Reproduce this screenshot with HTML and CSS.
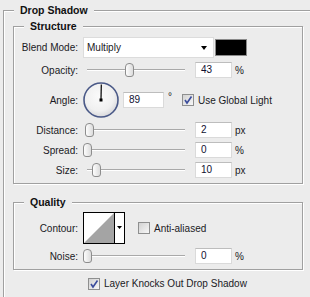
FILE: index.html
```html
<!DOCTYPE html>
<html lang="en">
<head>
    <meta charset="UTF-8">
    <title>Drop Shadow</title>
    <link rel="stylesheet" href="styles.css">
</head>
<body>
    <fieldset class="panel">
        <legend>Drop Shadow</legend>

        <fieldset class="group structure">
            <legend>Structure</legend>
            <div class="row blend">
                <label class="lbl">Blend Mode:</label>
                <div class="select"><span>Multiply</span><span class="caret"></span></div>
                <div class="swatch"></div>
            </div>
            <div class="row">
                <label class="lbl">Opacity:</label>
                <div class="slider"><div class="track"></div><div class="thumb" style="left: 42px"></div></div>
                <div class="num">43</div><span class="unit">%</span>
            </div>
            <div class="row angle">
                <label class="lbl">Angle:</label>
                <svg class="dial" width="36" height="36" viewBox="0 0 36 36">
                    <defs>
                        <radialGradient id="dialFill" cx="45%" cy="40%" r="60%">
                            <stop offset="0" stop-color="#fbfbfb"/>
                            <stop offset="0.7" stop-color="#f0f0f0"/>
                            <stop offset="1" stop-color="#d9d9dc"/>
                        </radialGradient>
                    </defs>
                    <circle cx="18" cy="18" r="17" fill="url(#dialFill)" stroke="#4a5987" stroke-width="1.6"/>
                    <line x1="18" y1="18" x2="18.3" y2="2.5" stroke="#000" stroke-width="1.2"/>
                    <rect x="16.5" y="16.5" width="3" height="3" fill="#000"/>
                </svg>
                <div class="num wide">89</div><span class="unit deg">&deg;</span>
                <span class="check on"></span><span class="check-text">Use Global Light</span>
            </div>
            <div class="row">
                <label class="lbl">Distance:</label>
                <div class="slider"><div class="track"></div><div class="thumb" style="left: 2px"></div></div>
                <div class="num">2</div><span class="unit">px</span>
            </div>
            <div class="row">
                <label class="lbl">Spread:</label>
                <div class="slider"><div class="track"></div><div class="thumb" style="left: 0px"></div></div>
                <div class="num">0</div><span class="unit">%</span>
            </div>
            <div class="row">
                <label class="lbl">Size:</label>
                <div class="slider"><div class="track"></div><div class="thumb" style="left: 9px"></div></div>
                <div class="num">10</div><span class="unit">px</span>
            </div>
        </fieldset>

        <fieldset class="group quality">
            <legend>Quality</legend>
            <div class="row contour-row">
                <label class="lbl">Contour:</label>
                <svg class="contour" width="42" height="32" viewBox="0 0 42 32">
                    <rect x="0.5" y="0.5" width="41" height="31" fill="#fff" stroke="#000"/>
                    <polygon points="1,31 31,1 31,31" fill="#a4a4a4"/>
                    <line x1="31.5" y1="0" x2="31.5" y2="32" stroke="#000"/>
                    <polygon points="34,14 39,14 36.5,17" fill="#000"/>
                </svg>
                <span class="check off"></span><span class="check-text">Anti-aliased</span>
            </div>
            <div class="row">
                <label class="lbl">Noise:</label>
                <div class="slider"><div class="track"></div><div class="thumb" style="left: 0px"></div></div>
                <div class="num">0</div><span class="unit">%</span>
            </div>
        </fieldset>

        <div class="knock">
            <span class="check on"></span><span class="check-text">Layer Knocks Out Drop Shadow</span>
        </div>
    </fieldset>
</body>
</html>
```

FILE: styles.css
```css
body {
    margin: 0;
    width: 310px;
    height: 297px;
    overflow: hidden;
    background: #ececec;
    font-family: "Liberation Sans", Arial, sans-serif;
    font-size: 10px;
    color: #1a1a24;
}

/* group boxes, etched like the old windows dialogs */
.panel {
    margin: 4px 0 0 3px;
    padding: 3px 0 7px 9px;
    border: 0;
    border-top: 1px solid #a0a0a0;
    border-left: 1px solid #a0a0a0;
    box-shadow: inset 1px 1px 0 #fff;
    min-width: 0;
}
legend {
    font-weight: bold;
    font-size: 10.5px;
    line-height: 13px;
    padding: 0 6px;
    background: #ececec;
    color: #111;
}
.panel > legend {
    margin-left: 1px;
}
.group {
    box-sizing: border-box;
    width: 290px;
    margin: 0;
    padding: 4px 0 5px 0;
    border: 1px solid #a0a0a0;
    box-shadow: inset 1px 1px 0 #fff, 1px 1px 0 #fff;
    display: flex;
    flex-direction: column;
    gap: 4px;
}
.group > legend {
    margin-left: 10px;
}
.quality {
    margin-top: 12px;
    padding-top: 3px;
}

/* rows */
.row {
    display: flex;
    align-items: center;
    height: 16px;
}
.row.blend {
    height: 21px;
}
.row.angle {
    height: 36px;
}
.row.contour-row {
    height: 32px;
}
.lbl {
    width: 64px;
    margin-right: 5px;
    text-align: right;
    white-space: nowrap;
}

/* blend mode */
.select {
    box-sizing: border-box;
    width: 131px;
    height: 21px;
    background: #fff;
    border: 1px solid #dcdcdc;
    display: flex;
    align-items: center;
    justify-content: space-between;
    padding: 0 6px 0 3px;
}
.caret {
    width: 0;
    height: 0;
    border-left: 3.5px solid transparent;
    border-right: 3.5px solid transparent;
    border-top: 4px solid #000;
}
.swatch {
    box-sizing: border-box;
    width: 32px;
    height: 17px;
    margin-left: 1px;
    background: #000;
    border: 1px solid #8a8a8a;
}

/* sliders */
.slider {
    position: relative;
    width: 106px;
    height: 16px;
    margin-right: 6px;
}
.track {
    position: absolute;
    left: 4px;
    right: 4px;
    top: 7px;
    height: 1px;
    background: #a9a9a9;
    box-shadow: 0 1px 0 #fff;
}
.thumb {
    position: absolute;
    top: 1px;
    width: 7px;
    height: 12px;
    border: 1px solid #8d8d8d;
    border-radius: 4px 4px 3px 3px;
    background: linear-gradient(to right, #fdfdfd, #dcdcdc);
}

/* number fields */
.num {
    box-sizing: border-box;
    width: 37px;
    height: 16px;
    line-height: 14px;
    padding-left: 5px;
    background: #fff;
    border: 1px solid #dadada;
    border-top-color: #bdbdbd;
    color: #101030;
}
.num.wide {
    width: 41px;
    margin-left: 4px;
}
.unit {
    margin-left: 3px;
}
.unit.deg {
    margin-left: 4px;
    align-self: flex-start;
    margin-top: 9px;
}
.dial {
    display: block;
}

/* checkboxes */
.check {
    box-sizing: border-box;
    width: 12px;
    height: 12px;
    border: 1px solid #8e8f8f;
    background: linear-gradient(135deg, #d2d2d2, #f7f7f7);
    flex: none;
}
.check.on {
    background-image: url("data:image/svg+xml,%3Csvg xmlns='http://www.w3.org/2000/svg' width='10' height='10'%3E%3Cpath d='M2 5 L4 8 L8.5 1.5' fill='none' stroke='%233b4c9c' stroke-width='1.6'/%3E%3C/svg%3E"), linear-gradient(135deg, #d2d2d2, #f7f7f7);
}
.check-text {
    margin-left: 4px;
    white-space: nowrap;
}
.angle .check {
    margin-left: 10px;
}
.contour {
    display: block;
}
.contour-row .check {
    margin-left: 13px;
}

.knock {
    display: flex;
    align-items: center;
    height: 13px;
    margin: 7px 0 0 75px;
}
```
